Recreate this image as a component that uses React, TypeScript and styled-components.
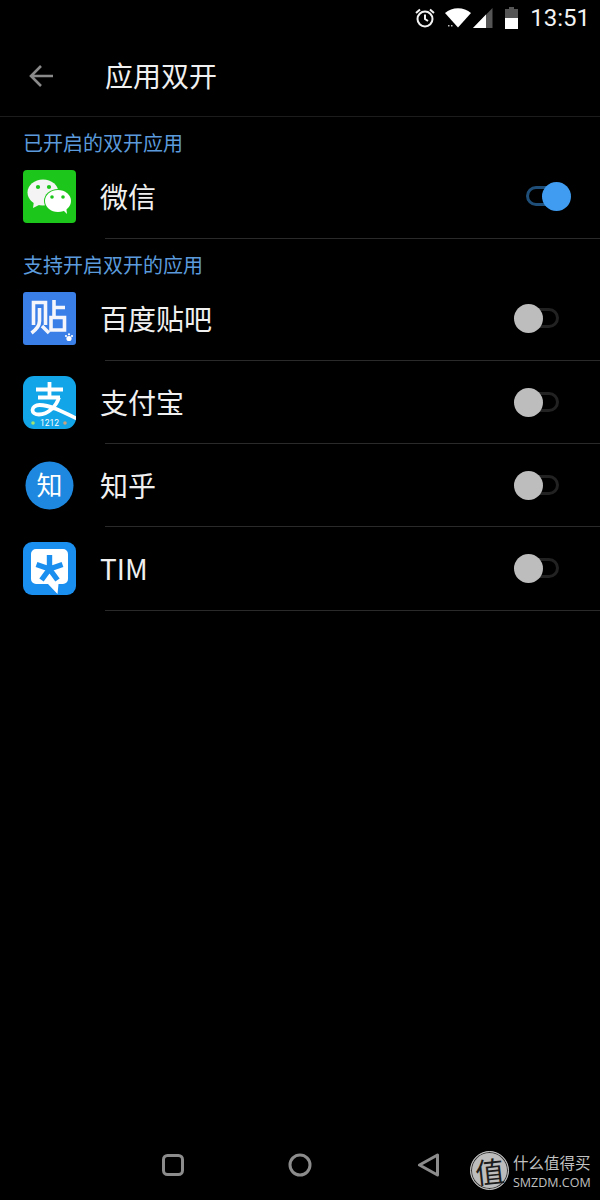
import styled, { createGlobalStyle } from 'styled-components';

const GlobalStyle = createGlobalStyle`
  html, body {
    margin: 0;
    padding: 0;
    background: #000;
  }
  * {
    box-sizing: border-box;
  }
`;

const FONT = `"Noto Sans CJK SC", "Roboto", sans-serif`;

interface AppItem {
  name: string;
  icon: React.ReactNode;
  tall?: boolean;
}

const WeChatIcon = () => (
  <svg width="53" height="53" viewBox="0 0 53 53">
    <rect width="53" height="53" rx="4" fill="#1dc61a" />
    <ellipse cx="20" cy="22.500" rx="15.500" ry="13" fill="#f4f4f4" />
    <path d="M11 31l-1 7 8-4z" fill="#f4f4f4" />
    <ellipse cx="35" cy="31" rx="14" ry="12" fill="#1dc61a" />
    <ellipse cx="35" cy="31" rx="13" ry="11" fill="#fff" />
    <path d="M39 39l5 5-1-8z" fill="#fff" />
    <circle cx="15" cy="17" r="2.100" fill="#1dc61a" />
    <circle cx="26" cy="17" r="2.100" fill="#1dc61a" />
    <circle cx="29" cy="27" r="1.800" fill="#1dc61a" />
    <circle cx="40" cy="27" r="1.800" fill="#1dc61a" />
  </svg>
);

const TiebaIcon = () => (
  <svg width="53" height="53" viewBox="0 0 53 53">
    <rect width="53" height="53" rx="3" fill="#3a7ee8" />
    <g fill="none" stroke="#f4f6fb" strokeWidth="3.600">
      <path d="M10.500 33V10.500h12V33" />
      <path d="M16.500 16v13c0 4-2.500 8-8 12" />
      <path d="M19 34l7 7" />
      <path d="M31 8v16M31 15.500h11M28 25.500h13.500V38H28z" />
    </g>
    <circle cx="46" cy="46.500" r="2.600" fill="#fff" />
    <circle cx="43" cy="44" r="1.100" fill="#fff" />
    <circle cx="46" cy="42.300" r="1.100" fill="#fff" />
    <circle cx="49" cy="44" r="1.100" fill="#fff" />
  </svg>
);

const AlipayIcon = () => (
  <svg width="53" height="53" viewBox="0 0 53 53">
    <defs>
      <clipPath id="alipay-clip">
        <rect width="53" height="53" rx="11" />
      </clipPath>
    </defs>
    <g clipPath="url(#alipay-clip)">
      <rect width="53" height="53" fill="#12a5e8" />
      <g fill="none" stroke="#fff" strokeWidth="3.800">
        <path d="M26.500 6v15M13 13.500h27M15 21.500h22" />
        <path d="M36 21.500c-3 9-11 17-20 17-4 0-6.500-2-6.500-4.500s3-5 7-5c10 0 22 6 38 14" />
      </g>
      <circle cx="10" cy="47" r="1.800" fill="#a3e36f" />
      <circle cx="42" cy="47" r="1.800" fill="#c9a27f" />
    </g>
    <Tiny x="26.500" y="50" textAnchor="middle">1212</Tiny>
  </svg>
);

const ZhihuIcon = () => (
  <svg width="53" height="53" viewBox="0 0 53 53">
    <circle cx="26.500" cy="26.500" r="24" fill="#1e88e0" />
    <ZhihuGlyph x="26.500" y="35.500" textAnchor="middle">知</ZhihuGlyph>
  </svg>
);

const TimIcon = () => (
  <svg width="53" height="53" viewBox="0 0 53 53">
    <rect width="53" height="53" rx="9" fill="#1b8ff0" />
    <path d="M13 7h27a5 5 0 0 1 5 5v25a5 5 0 0 1-5 5h-4.500l-1 10-9.500-10H13a5 5 0 0 1-5-5V12a5 5 0 0 1 5-5z" fill="#fff" />
    <g stroke="#1b8ff0" strokeWidth="5.400" fill="none">
      <path d="M26.500 13v14M26.500 27l-13-4.500M26.500 27l13-4.500M26.500 27l-8 11M26.500 27l8 11" />
    </g>
  </svg>
);

const enabledApps: AppItem[] = [{ name: '微信', icon: <WeChatIcon />, tall: true }];

const supportedApps: AppItem[] = [
  { name: '百度贴吧', icon: <TiebaIcon />, tall: true },
  { name: '支付宝', icon: <AlipayIcon /> },
  { name: '知乎', icon: <ZhihuIcon /> },
  { name: 'TIM', icon: <TimIcon />, tall: true },
];

function App() {
  return (
    <Screen>
      <GlobalStyle />
      <StatusBar>
        <StatusIcon $gap={0} width="22" height="22" viewBox="0 0 22 22" fill="none" stroke="#f2f2f2" strokeWidth="2">
          <circle cx="11" cy="12" r="7.500" />
          <path d="M11 7.500V12l3 2M2 6l4-3.500M20 6l-4-3.500" />
        </StatusIcon>
        <StatusIcon $gap={9} width="26" height="20" viewBox="0 0 26 20">
          <path d="M0 5C7-1.500 19-1.500 26 5L13 19.500z" fill="#fff" />
          <path d="M3 17h1.500v1.500H3zM6 17h1.500v1.500H6z" fill="#bbb" />
        </StatusIcon>
        <StatusIcon $gap={2} width="20" height="20" viewBox="0 0 20 20">
          <path d="M19.500 0v20H0z" fill="#555" />
          <path d="M13 6.500V20H0z" fill="#fff" />
        </StatusIcon>
        <StatusIcon $gap={12} width="13" height="22" viewBox="0 0 13 22">
          <path d="M4 0h5v2h4v20H0V2h4z" fill="#555" />
          <path d="M0 11h13v11H0z" fill="#fff" />
        </StatusIcon>
        <Clock>13:51</Clock>
      </StatusBar>
      <Toolbar>
        <svg width="26" height="24" viewBox="0 0 26 24" fill="none" stroke="#8a8a8a" strokeWidth="2.600">
          <path d="M25 12H3M13 2L3 12l10 10" />
        </svg>
        <Title>应用双开</Title>
      </Toolbar>
      <SectionTitle>已开启的双开应用</SectionTitle>
      {enabledApps.map(item => (
        <Row key={item.name} $tall={item.tall}>
          <IconBox>{item.icon}</IconBox>
          <Name>{item.name}</Name>
          <Toggle $on />
        </Row>
      ))}
      <SectionTitle>支持开启双开的应用</SectionTitle>
      {supportedApps.map(item => (
        <Row key={item.name} $tall={item.tall}>
          <IconBox>{item.icon}</IconBox>
          <Name>{item.name}</Name>
          <Toggle />
        </Row>
      ))}
      <Spacer />
      <NavBar>
        <NavButtons>
          <svg width="24" height="24" viewBox="0 0 24 24" fill="none" stroke="#8c8c8c" strokeWidth="3">
            <rect x="2.500" y="2.500" width="19" height="19" rx="4" />
          </svg>
          <svg width="24" height="24" viewBox="0 0 24 24" fill="none" stroke="#8c8c8c" strokeWidth="3">
            <circle cx="12" cy="12" r="10" />
          </svg>
          <svg width="24" height="24" viewBox="0 0 24 24" fill="none" stroke="#8c8c8c" strokeWidth="3" strokeLinejoin="round">
            <path d="M22.500 2v20L4.500 12z" />
          </svg>
        </NavButtons>
        <Watermark>
          <Seal>
            <span>值</span>
          </Seal>
          <WatermarkText>
            <WatermarkCn>什么值得买</WatermarkCn>
            <WatermarkEn>SMZDM.COM</WatermarkEn>
          </WatermarkText>
        </Watermark>
      </NavBar>
    </Screen>
  );
}

export default App;

const Screen = styled.div`
  width: 600px;
  height: 1200px;
  display: flex;
  flex-direction: column;
  overflow: hidden;
  background: #000;
  font-family: ${FONT};
`;

const StatusBar = styled.div`
  height: 36px;
  display: flex;
  align-items: center;
  justify-content: flex-end;
  padding-right: 10px;
`;

const StatusIcon = styled.svg<{ $gap: number }>`
  flex-shrink: 0;
  margin-left: ${p => p.$gap}px;
`;

const Clock = styled.span`
  margin-left: 12px;
  color: #f2f2f2;
  font-family: Roboto, sans-serif;
  font-size: 24px;
  line-height: 36px;
`;

const Toolbar = styled.div`
  height: 81px;
  display: flex;
  align-items: center;
  padding-left: 28px;
  gap: 51px;
  border-bottom: 1px solid #1c1c1c;
`;

const Title = styled.h1`
  margin: 0 0 2px;
  color: #f0f0f0;
  font-size: 28px;
  font-weight: 400;
  line-height: 40px;
`;

const SectionTitle = styled.div`
  height: 38px;
  padding: 12px 0 0 23px;
  color: #5b9bdc;
  font-size: 20px;
  line-height: 28px;
`;

const Row = styled.div<{ $tall?: boolean }>`
  position: relative;
  height: ${p => (p.$tall ? 84 : 83)}px;
  display: flex;
  align-items: flex-start;
  padding: 15px 41px 0 23px;
  &::after {
    content: '';
    position: absolute;
    left: 105px;
    right: 0;
    bottom: 0;
    height: 1px;
    background: #2a2a2a;
  }
`;

const IconBox = styled.div`
  width: 53px;
  height: 53px;
  flex-shrink: 0;
  svg {
    display: block;
  }
`;

const Name = styled.div`
  flex: 1;
  margin-left: 24px;
  color: #f0f0f0;
  font-size: 28px;
  line-height: 53px;
`;

const Toggle = styled.div<{ $on?: boolean }>`
  position: relative;
  width: 33px;
  height: 20px;
  margin-top: 16px;
  border: 3px solid ${p => (p.$on ? '#1f4f78' : '#222')};
  border-radius: 10px;
  &::after {
    content: '';
    position: absolute;
    top: -7px;
    ${p => (p.$on ? 'right: -15px;' : 'left: -15px;')}
    width: 29px;
    height: 29px;
    border-radius: 50%;
    background: ${p => (p.$on ? '#3f9cf0' : '#bdbdbd')};
  }
`;

const Spacer = styled.div`
  flex: 1;
`;

const NavBar = styled.div`
  position: relative;
  height: 70px;
  display: flex;
  align-items: center;
  padding: 0 0 0 161px;
`;

const NavButtons = styled.div`
  display: flex;
  align-items: center;
  gap: 103px;
`;

const Watermark = styled.div`
  position: absolute;
  left: 470px;
  top: 21px;
  display: flex;
  align-items: flex-start;
  gap: 4px;
`;

const Seal = styled.div`
  width: 39px;
  height: 39px;
  display: flex;
  align-items: center;
  justify-content: center;
  border-radius: 50%;
  border: 1px solid #c4c4c4;
  box-shadow: inset 0 0 0 1px #333;
  background: #bdbdbd;
  color: #1c1c1c;
  font-size: 29px;
  span {
    display: block;
    line-height: 37px;
    transform: rotate(-6deg);
  }
`;

const WatermarkText = styled.div`
  display: flex;
  flex-direction: column;
`;

const WatermarkCn = styled.span`
  color: #c0c0c0;
  font-size: 15.500px;
  line-height: 22px;
  white-space: nowrap;
`;

const WatermarkEn = styled.span`
  margin-top: 2px;
  color: #c0c0c0;
  font-family: 'Open Sans', sans-serif;
  font-size: 12.500px;
  line-height: 16px;
  white-space: nowrap;
`;

const Tiny = styled.text`
  fill: #fff;
  font-family: Roboto, sans-serif;
  font-size: 8.500px;
`;

const ZhihuGlyph = styled.text`
  fill: #fff;
  font-family: ${FONT};
  font-size: 26px;
`;
